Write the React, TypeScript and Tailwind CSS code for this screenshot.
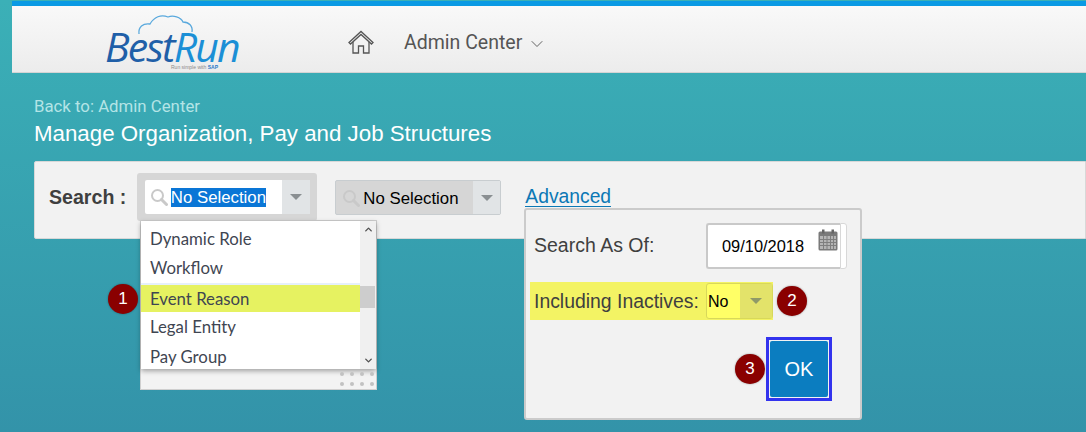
import { ChevronDown, ChevronUp } from "lucide-react";

const arial = { fontFamily: '"Liberation Sans", Arial, sans-serif' };

function Caret({ className = "border-t-[#8a8f92]" }: { className?: string }) {
  return <span className={`block w-0 h-0 border-x-[6px] border-x-transparent border-t-[6px] ${className}`} />;
}

function SearchIcon() {
  return (
    <svg width="18" height="18" viewBox="0 0 18 18" fill="none" stroke="#c9c9c9" strokeWidth="2" className="shrink-0">
      <circle cx="7.5" cy="7.5" r="5.5" />
      <path d="M11.5 11.5 L16.5 16.5" strokeWidth="3" strokeLinecap="round" />
    </svg>
  );
}

function Badge({ n }: { n: number }) {
  return (
    <span className="w-[30px] h-[30px] rounded-full bg-[#8a0000] text-white text-[17px] flex items-center justify-center shadow-[0_0_2px_rgba(0,0,0,0.4)]">
      {n}
    </span>
  );
}

function CalendarIcon() {
  return (
    <svg width="20" height="22" viewBox="0 0 20 22">
      <rect x="0.5" y="2.5" width="19" height="19" rx="1.5" fill="#7a7a7a" />
      <rect x="4" y="0.5" width="2.5" height="4" fill="#666" />
      <rect x="13.5" y="0.5" width="2.5" height="4" fill="#666" />
      <rect x="2" y="7" width="16" height="13" fill="#b5b5b5" />
      <path d="M2 10.5H18M2 13.5H18M2 16.5H18M5.5 7V20M9 7V20M12.5 7V20M15.5 7V20" stroke="#7f7f7f" strokeWidth="1" />
    </svg>
  );
}

function Logo() {
  return (
    <div className="relative w-[140px] h-[66px] shrink-0">
      <svg width="60" height="26" viewBox="0 0 60 26" fill="none" className="absolute left-[37px] top-[7px]">
        <path
          d="M2 21C1 14 6 10 13 11C17 4 24 1 31 4C36 2 44 4 46 9C52 9 56 13 55 19"
          stroke="#5aa9dd"
          strokeWidth="1.3"
        />
      </svg>
      <span className="absolute left-[5px] top-[22px] text-[41px] leading-[36px] italic tracking-[-1.9px] whitespace-nowrap" style={{ fontFamily: '"Open Sans", sans-serif' }}>
        <span className="text-[#1f5fa8]">Best</span>
        <span className="text-[#1b8fd6]">Run</span>
      </span>
      <span className="absolute left-[71px] top-[58px] text-[5px] leading-[7px] text-[#8a8a8a] whitespace-nowrap">
        Run simple with <span className="text-[#2a78c8] font-bold">SAP</span>
      </span>
    </div>
  );
}

export default function App() {
  return (
    <div
      className="relative w-[1086px] h-[432px] overflow-hidden bg-gradient-to-b from-[#3bb0b7] to-[#3393a9]"
      style={arial}
    >
      {/* Top bar */}
      <div className="ml-[12px] mt-px h-[5px] bg-[#0a9ae4]" />
      <div className="ml-[12px] h-[67px] flex items-center bg-gradient-to-b from-[#f9f9f9] to-[#ececec] border-b border-[#d4d4d4]">
        <div className="ml-[88px]">
          <Logo />
        </div>
        <svg width="26" height="25" viewBox="0 0 26 25" fill="none" stroke="#555" strokeWidth="1.3" className="ml-[108px] mt-[6px]">
          <path d="M1 12.5 L13 1.5 L25 12.5 L23.5 14 L13 4.5 L2.5 14 Z" />
          <path d="M5 12 V23 H10.5 V16 H15.5 V23 H21 V12" />
        </svg>
        <span className="ml-[30px] mt-[8px] text-[19.5px] text-[#555] whitespace-nowrap" style={{ fontFamily: "Roboto, sans-serif" }}>
          Admin Center
        </span>
        <ChevronDown size={20} strokeWidth={1.1} className="ml-[5px] mt-[10px] text-[#555]" />
      </div>

      {/* Title */}
      <div className="pl-[34px] pt-[23px]">
        <div className="text-[16.8px] leading-[20px] text-[#b4e4e6]" style={{ fontFamily: "Roboto, sans-serif" }}>
          Back to: Admin Center
        </div>
        <div className="mt-[6px] text-[22.3px] leading-[24px] text-white">Manage Organization, Pay and Job Structures</div>
      </div>

      {/* Search strip */}
      <div className="ml-[34px] mt-[15px] h-[78px] flex items-start bg-[#f2f2f2] border border-[#d8d8d8] rounded-l-[2px]">
        <span className="ml-[14px] mt-[23px] text-[19.6px] leading-[24px] font-bold text-[#3f3f3f] whitespace-nowrap">Search :</span>
        <div className="ml-[11px] mt-[11px] w-[180px] h-[48px] rounded-[3px] bg-[#d6d6d6] flex items-center justify-center">
          <div className="w-[165px] h-[34px] flex items-center bg-white rounded-[2px]">
            <div className="flex-1 flex items-center pl-[5px] gap-[3px]">
              <SearchIcon />
              <span className="mt-px bg-[#0a76d6] text-white text-[16.8px] leading-[19px] whitespace-nowrap">No Selection</span>
            </div>
            <div className="w-[28px] h-full bg-[#e1e4e6] flex items-center justify-center">
              <Caret />
            </div>
          </div>
        </div>
        <div className="ml-[18px] mt-[18px] w-[166px] h-[35px] flex items-center rounded-[2px] bg-[#d6d6d6] border border-[#c8cdd0]">
          <div className="flex-1 flex items-center pl-[6px] gap-[3px]">
            <SearchIcon />
            <span className="mt-px text-black text-[16.8px] leading-[19px] whitespace-nowrap">No Selection</span>
          </div>
          <div className="w-[27px] h-full bg-[#e1e4e6] flex items-center justify-center">
            <Caret />
          </div>
        </div>
        <a className="ml-[24px] mt-[25px] text-[19.3px] leading-[19px] text-[#0b78b5] border-b border-[#0b78b5] whitespace-nowrap">Advanced</a>
      </div>

      {/* Dropdown list */}
      <div className="absolute left-[140px] top-[220px] w-[237px] h-[170px] bg-[#f3f3f3] border border-[#cfcfcf]">
        <div className="relative flex h-[148px] bg-white shadow-[0_2px_5px_rgba(0,0,0,0.35)]">
          <div className="flex-1 pt-[2.5px] text-[16.8px] text-[#3f4652]" style={{ fontFamily: "Lato, sans-serif" }}>
            {["Dynamic Role", "Workflow"].map((t) => (
              <div key={t} className="h-[29.5px] pl-[9px] flex items-center">{t}</div>
            ))}
            <div className="h-[29.5px] pl-[9px] flex items-center bg-[#e6f261] border-t-2 border-[#e6f0fb]">Event Reason</div>
            {["Legal Entity", "Pay Group"].map((t) => (
              <div key={t} className="h-[29.5px] pl-[9px] flex items-center">{t}</div>
            ))}
          </div>
          <div className="w-[16px] bg-[#f0f0f0] flex flex-col items-center justify-between py-[3px] relative">
            <ChevronUp size={11} strokeWidth={3} className="text-[#505050]" />
            <div className="absolute top-[65px] left-0 w-[15px] h-[22px] bg-[#cdcdcd]" />
            <ChevronDown size={11} strokeWidth={3} className="text-[#505050]" />
          </div>
        </div>
        <div className="absolute right-[2px] bottom-[3px] grid grid-cols-4 gap-x-[6px] gap-y-[6px]">
          {Array.from({ length: 8 }).map((_, i) => (
            <span key={i} className="w-[4px] h-[4px] rounded-full bg-[#c2c2c2]" />
          ))}
        </div>
      </div>
      <div className="absolute left-[108px] top-[284px]">
        <Badge n={1} />
      </div>

      {/* Advanced popover */}
      <div className="absolute left-[524px] top-[208px] w-[338px] h-[212px] bg-[#f2f2f2] border-2 border-[#cbcbcb] rounded-[3px]">
        <div className="flex items-center pl-[8px] pt-[13px]">
          <span className="w-[172px] mb-[2px] text-[19.5px] leading-[24px] text-[#3f3f3f]">Search As Of:</span>
          <div className="w-[134px] h-[46px] flex items-center bg-white border-2 border-[#c9c9c9] border-r-0 rounded-l-[3px] pl-[14px] text-[16.4px] text-black relative">
            09/10/2018
            <span className="absolute left-[110px] top-[4px]">
              <CalendarIcon />
            </span>
          </div>
          <div className="w-[7px] h-[46px] bg-white border border-[#d8d8d8] rounded-r-[3px]" />
        </div>
        <div className="flex items-center mt-[13px] ml-[4px]">
          <div className="flex items-center h-[38px] w-[243px] bg-[#f3f364] pl-[4px] text-[19.4px] text-[#3f3f3f]">
            <span className="w-[172px] mt-[2px] whitespace-nowrap">Including Inactives:</span>
            <div className="w-[67px] h-[36px] flex items-center bg-[#ffff66] border border-[#d8d85a] rounded-[3px]">
              <span className="flex-1 pl-[1px] mt-[2px] text-[16px] text-black">No</span>
              <div className="w-[32px] h-full bg-[#e3e36a] flex items-center justify-center">
                <Caret className="border-t-[#8f9a68]" />
              </div>
            </div>
          </div>
          <span className="ml-[4px]">
            <Badge n={2} />
          </span>
        </div>
        <div className="flex items-center justify-end mt-[17px] pr-[28px] gap-[1px]">
          <Badge n={3} />
          <button className="w-[66px] h-[64px] border-[3px] border-[#3333ee] p-px">
            <span className="flex w-full h-full items-center justify-center bg-[#0b7dc0] text-white text-[20px] rounded-[2px]">OK</span>
          </button>
        </div>
      </div>
    </div>
  );
}
